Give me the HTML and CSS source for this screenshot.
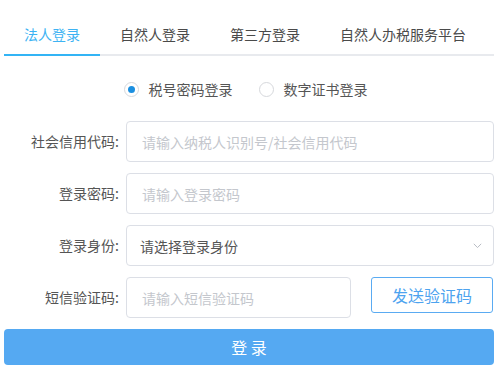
FILE: index.html
```html
<!DOCTYPE html>
<html lang="zh-CN">
<head>
<meta charset="utf-8">
<title>登录</title>
<link rel="stylesheet" href="styles.css">
</head>
<body>
<div class="wrap">
  <div class="tabs">
    <div class="tab active">法人登录</div>
    <div class="tab">自然人登录</div>
    <div class="tab">第三方登录</div>
    <div class="tab">自然人办税服务平台</div>
  </div>
  <div class="radios">
    <label class="radio checked"><span class="circle"></span><span class="rtext">税号密码登录</span></label>
    <label class="radio"><span class="circle"></span><span class="rtext">数字证书登录</span></label>
  </div>
  <div class="form">
    <div class="row">
      <div class="label">社会信用代码:</div>
      <input class="input" type="text" placeholder="请输入纳税人识别号/社会信用代码">
    </div>
    <div class="row">
      <div class="label">登录密码:</div>
      <input class="input" type="password" placeholder="请输入登录密码">
    </div>
    <div class="row">
      <div class="label">登录身份:</div>
      <div class="input select">
        <span>请选择登录身份</span>
        <svg class="arrow" width="9" height="6" viewBox="0 0 9 6"><path d="M0.8 0.8 L4.5 4.6 L8.2 0.8" fill="none" stroke="#b8bcc4" stroke-width="1"/></svg>
      </div>
    </div>
    <div class="row">
      <div class="label">短信验证码:</div>
      <div class="sms">
        <input class="input sms-input" type="text" placeholder="请输入短信验证码">
        <button class="send" type="button">发送验证码</button>
      </div>
    </div>
  </div>
  <button class="submit" type="button">登 录</button>
</div>
</body>
</html>
```
FILE: styles.css
```css
* { box-sizing: border-box; }
body {
  margin: 0;
  background: #fff;
  font-family: "Noto Sans CJK SC", "Noto Sans", sans-serif;
  font-size: 14px;
  color: #606266;
}
.wrap {
  width: 490px;
  margin-left: 4px;
  padding-top: 14px;
}
.tabs {
  display: flex;
  border-bottom: 2px solid #e8eaee;
}
.tab {
  padding: 0 20px;
  height: 42px;
  line-height: 41px;
  font-size: 14px;
  color: #4a4a4a;
  margin-bottom: -2px;
  border-bottom: 2px solid transparent;
}
.tab.active {
  color: #3db3f3;
  border-bottom-color: #33b4f5;
}
.radios {
  display: flex;
  justify-content: center;
  gap: 26px;
  margin-top: 21px;
  height: 24px;
  padding-right: 7px;
}
.radio {
  display: flex;
  align-items: center;
  gap: 10px;
  color: #555;
  font-size: 14px;
}
.circle {
  width: 15px;
  height: 15px;
  border: 1px solid #d6d8dc;
  border-radius: 50%;
  display: flex;
  align-items: center;
  justify-content: center;
}
.radio.checked .circle::before {
  content: "";
  width: 7px;
  height: 7px;
  border-radius: 50%;
  background: #1b8fe0;
}
.form {
  margin-top: 20px;
  display: flex;
  flex-direction: column;
  gap: 11px;
}
.row {
  display: grid;
  grid-template-columns: 122px 1fr;
  align-items: start;
}
.label {
  text-align: right;
  padding-right: 7px;
  line-height: 41px;
  color: #555;
  font-size: 14px;
}
.input {
  height: 41px;
  width: 100%;
  border: 1px solid #dcdfe6;
  border-radius: 4px;
  padding: 0 15px;
  font-family: inherit;
  font-size: 14px;
  color: #606266;
  background: #fff;
  outline: none;
}
.input::placeholder { color: #c4c7cd; }
.select {
  display: flex;
  align-items: center;
  justify-content: space-between;
  padding: 0 11px 0 13px;
  color: #555;
}
.sms {
  display: flex;
  gap: 20px;
  align-items: flex-start;
}
.sms-input { width: 225px; }
.send {
  width: 122px;
  height: 36px;
  border: 1px solid #5aabf2;
  border-radius: 3px;
  background: #fff;
  color: #4da3ef;
  font-family: inherit;
  font-size: 16px;
  padding: 0;
}
.submit {
  display: block;
  width: 100%;
  height: 36px;
  margin-top: 11px;
  border: none;
  border-radius: 4px;
  background: #55a9f2;
  color: #fff;
  font-family: inherit;
  font-size: 16px;
  padding: 0;
}
```
